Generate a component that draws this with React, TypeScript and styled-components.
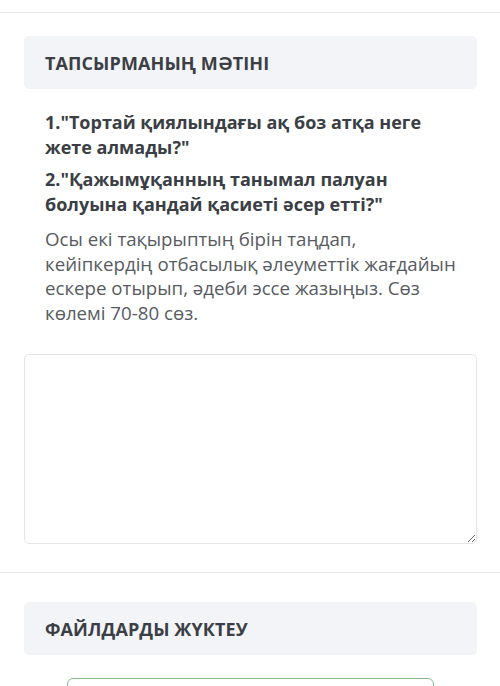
import { createGlobalStyle, styled } from "styled-components";

const GlobalStyle = createGlobalStyle`
  html, body {
    margin: 0;
    padding: 0;
    background: #ffffff;
  }
  body {
    font-family: "Open Sans", "Noto Sans", "DejaVu Sans", sans-serif;
    color: #3b3f45;
  }
`;

const Page = styled.div`
  padding-top: 12px;
`;

const Section = styled.section<{ $top?: number }>`
  border-top: 1px solid #e6e8eb;
  padding: ${({ $top }) => $top ?? 23}px 23px 28px 24px;
`;

const SectionHeader = styled.div`
  background: #f3f4f7;
  border-radius: 5px;
  height: 53px;
  display: flex;
  align-items: center;
  padding: 0 21px;
  font-size: 18px;
  font-weight: 700;
  color: #3b3f45;
  letter-spacing: 0.1px;
`;

const TaskBody = styled.div`
  padding: 21px 21px 0;
  display: flex;
  flex-direction: column;
  gap: 8px;
`;

const Question = styled.p`
  margin: 0;
  font-size: 18px;
  line-height: 24.5px;
  font-weight: 700;
  color: #3b3f45;
`;

const Instruction = styled.p`
  margin: 3px 0 0;
  font-size: 18.7px;
  line-height: 24.5px;
  font-weight: 400;
  color: #575b61;
`;

const Answer = styled.textarea`
  display: block;
  box-sizing: border-box;
  width: 100%;
  height: 190px;
  margin-top: 29px;
  border: 1px solid #e3e5e8;
  border-radius: 5px;
  background: #ffffff;
  resize: vertical;
  font-family: inherit;
  font-size: 16px;
  padding: 10px 12px;
  outline: none;
`;

const UploadBody = styled.div`
  padding: 23px 43px 0;
`;

const UploadButton = styled.button`
  display: block;
  width: 100%;
  height: 44px;
  border: 1px solid #8bb98b;
  border-radius: 6px;
  background: #ffffff;
`;

export default function App() {
  return (
    <>
      <GlobalStyle />
      <Page>
        <Section>
          <SectionHeader>ТАПСЫРМАНЫҢ МӘТІНІ</SectionHeader>
          <TaskBody>
            <Question>1."Тортай қиялындағы ақ боз атқа неге жете алмады?"</Question>
            <Question>2."Қажымұқанның танымал палуан болуына қандай қасиеті әсер етті?"</Question>
            <Instruction>
              Осы екі тақырыптың бірін таңдап, кейіпкердің отбасылық әлеуметтік
              жағдайын ескере отырып, әдеби эссе жазыңыз. Сөз көлемі 70-80 сөз.
            </Instruction>
          </TaskBody>
          <Answer />
        </Section>
        <Section $top={29}>
          <SectionHeader>ФАЙЛДАРДЫ ЖҮКТЕУ</SectionHeader>
          <UploadBody>
            <UploadButton />
          </UploadBody>
        </Section>
      </Page>
    </>
  );
}
